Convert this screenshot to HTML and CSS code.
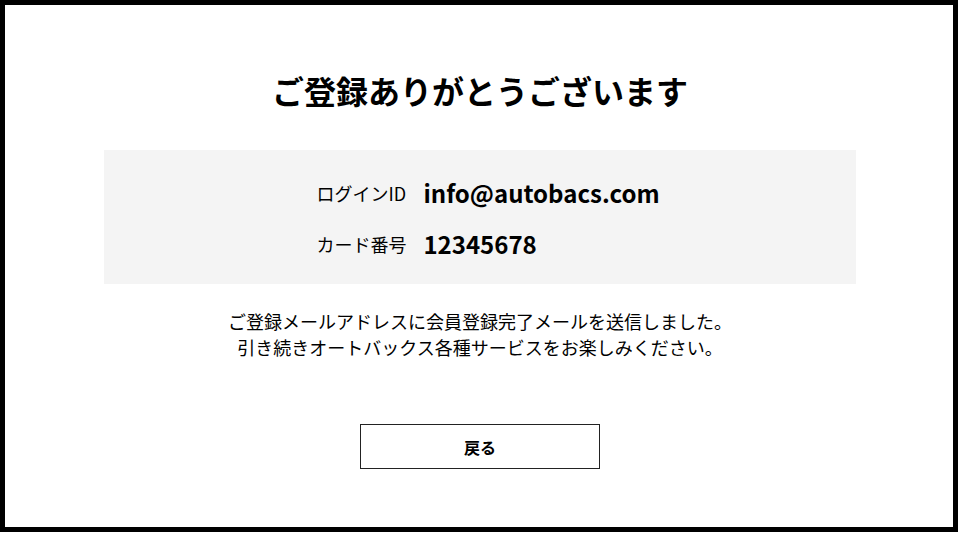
FILE: index.html
```html
<!DOCTYPE html>
<html lang="ja">
<head>
<meta charset="UTF-8" />
<meta name="viewport" content="width=device-width, initial-scale=1" />
<title>会員登録完了</title>
<link rel="stylesheet" href="styles.css">
</head>
<body>

<div class="frame">
  <h1 class="title">ご登録ありがとうございます</h1>

  <div class="account">
    <dl class="account-list">
      <dt>ログインID</dt>
      <dd>info@autobacs.com</dd>
      <dt>カード番号</dt>
      <dd>12345678</dd>
    </dl>
  </div>

  <p class="message">
    ご登録メールアドレスに会員登録完了メールを送信しました。<br />
    引き続きオートバックス各種サービスをお楽しみください。
  </p>

  <div class="actions">
    <a class="back-btn" href="#">戻る</a>
  </div>
</div>

</body>
</html>
```

FILE: styles.css
```css
html, body {
  margin: 0;
  padding: 0;
  background: #fff;
}
body {
  color: #000;
  font-family: "Noto Sans CJK JP", "Noto Sans", sans-serif;
}
.frame {
  box-sizing: border-box;
  width: 958px;
  height: 532px;
  border: 5px solid #000;
  padding: 61px 97px 0 99px;
}
.title {
  margin: 0;
  font-size: 32px;
  line-height: 48px;
  font-weight: bold;
  text-align: center;
}
.account {
  margin-top: 36px;
  background: #f4f4f4;
  padding: 25px 0 22px 16px;
}
.account-list {
  display: grid;
  grid-template-columns: auto auto;
  justify-content: center;
  column-gap: 17px;
  row-gap: 15px;
  margin: 0;
}
.account-list dt {
  font-size: 18px;
  line-height: 36px;
}
.account-list dd {
  margin: 0;
  font-size: 24px;
  line-height: 36px;
  font-weight: bold;
}
.message {
  margin: 24px 0 0;
  font-size: 18px;
  line-height: 26px;
  text-align: center;
}
.actions {
  margin-top: 64px;
  display: flex;
  justify-content: center;
}
.back-btn {
  box-sizing: border-box;
  width: 240px;
  height: 45px;
  border: 1px solid #222;
  display: flex;
  justify-content: center;
  align-items: center;
  font-size: 16px;
  font-weight: bold;
  color: #000;
  text-decoration: none;
}
```
